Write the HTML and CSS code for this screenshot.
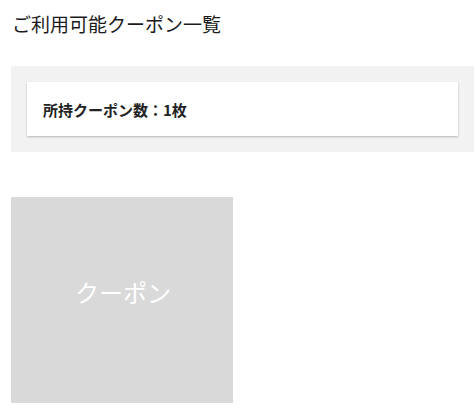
FILE: index.html
```
<!DOCTYPE html>
<html lang="ja">
<head>
<meta charset="utf-8">
<link rel="stylesheet" href="styles.css">
</head>
<body>
<div class="page">
  <h3 class="title">ご利用可能クーポン一覧</h3>
  <div class="summary">
    <div class="summary-card">所持クーポン数：1枚</div>
  </div>
  <div class="coupons">
    <div class="coupon"><span class="coupon-label">クーポン</span></div>
  </div>
</div>
</body>
</html>
```
FILE: styles.css
```
html, body {
  margin: 0;
  padding: 0;
  background: #fff;
}
body {
  font-family: "Noto Sans CJK JP", "Noto Sans", sans-serif;
  color: #222;
}
.page {
  padding: 10px 2px 0 11px;
}
.title {
  margin: 0;
  font-size: 19px;
  line-height: 28px;
  font-weight: normal;
  color: #1a1a1a;
  padding-left: 1px;
}
.summary {
  margin-top: 28px;
  background: #f2f2f2;
  padding: 16px;
}
.summary-card {
  background: #fff;
  height: 54px;
  box-sizing: border-box;
  padding: 0 16px 0 16px;
  display: flex;
  align-items: center;
  font-size: 15px;
  font-weight: bold;
  color: #222;
  box-shadow: 0 1px 2px rgba(0, 0, 0, 0.25);
}
.coupons {
  margin-top: 45px;
  display: flex;
}
.coupon {
  width: 222px;
  height: 206px;
  background: #d9d9d9;
  display: flex;
  align-items: center;
  justify-content: center;
  padding-bottom: 16px;
  box-sizing: border-box;
}
.coupon-label {
  color: #fff;
  font-size: 24px;
  line-height: 32px;
  padding-left: 2px;
}
```
